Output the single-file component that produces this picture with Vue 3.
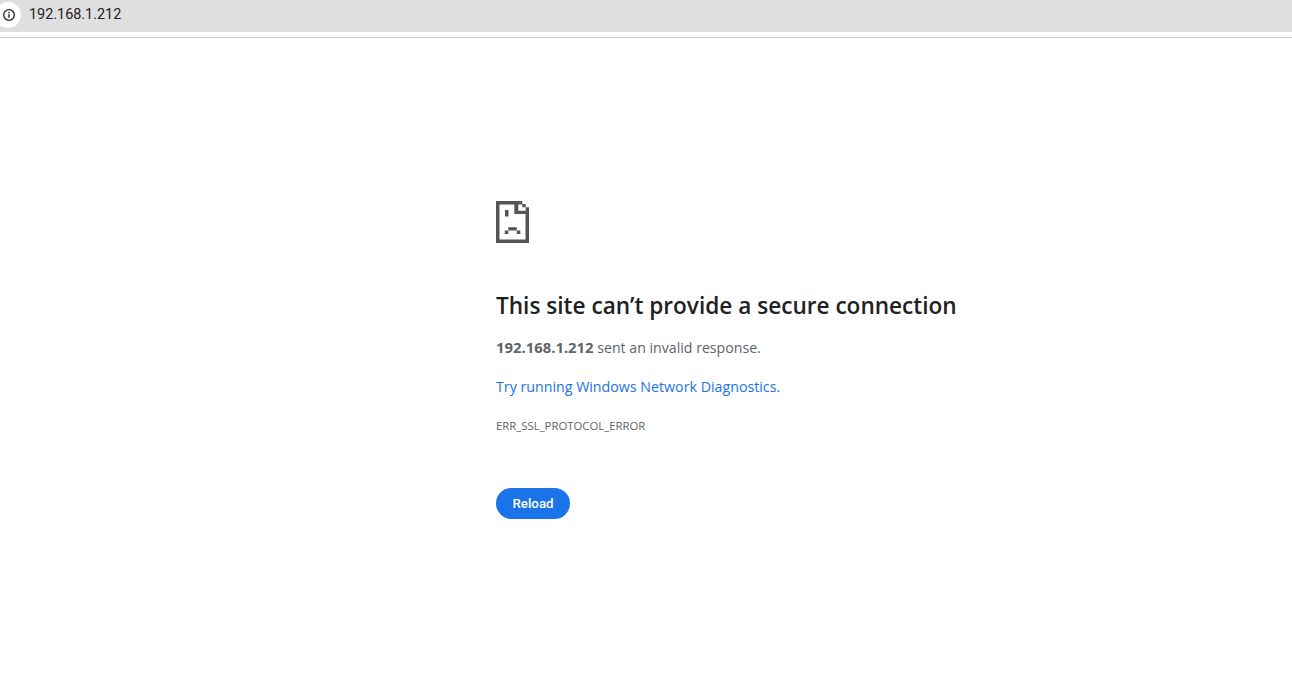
<script setup>
const host = '192.168.1.212';
</script>

<template>
  <div class="page">
    <header class="bar">
      <span class="site-info">
        <svg width="14" height="14" viewBox="0 0 14 14">
          <circle cx="7" cy="7" r="5.3" fill="none" stroke="#202124" stroke-width="1.3" />
          <rect x="6.3" y="6.2" width="1.4" height="3.6" fill="#202124" />
          <rect x="6.3" y="3.9" width="1.4" height="1.4" fill="#202124" />
        </svg>
      </span>
      <span class="url">{{ host }}</span>
    </header>
    <main class="content">
      <svg class="icon" width="33" height="42" viewBox="0 0 33 42">
        <path
          fill="#555"
          fill-rule="evenodd"
          d="M0 0H26.3V3H29.7V6.3H33V42H0ZM3.5 3.5V38.5H29.5V13H18.3V3.5ZM22.3 3.5V9.7H29.7V6.3H26.3V3.5Z"
        />
        <rect x="9" y="9" width="3.5" height="6.5" fill="#555" />
        <path fill="#555" d="M12.3 26.3H20.8V29.6H24.3V33H20.8V29.6H12.3V33H8.8V29.6H12.3Z" />
      </svg>
      <h1>This site can’t provide a secure connection</h1>
      <p class="desc"><strong>{{ host }}</strong> sent an invalid response.</p>
      <p class="link">Try running Windows Network Diagnostics.</p>
      <p class="code">ERR_SSL_PROTOCOL_ERROR</p>
      <button class="reload">Reload</button>
    </main>
  </div>
</template>

<style>
html, body {
  margin: 0;
  background: #fff;
  overflow: hidden;
}
</style>

<style scoped>
.page {
  min-height: 673px;
  font-family: "Open Sans", "Noto Sans", Arial, sans-serif;
}

.bar {
  height: 32px;
  background: #dfdfdf;
  display: flex;
  align-items: flex-start;
  border-bottom: 1px solid #fff;
  position: relative;
}

.bar::after {
  content: "";
  position: absolute;
  left: 0;
  right: 0;
  top: 37px;
  height: 1px;
  background: #cdcdcd;
}

.site-info {
  width: 26px;
  height: 26px;
  margin-left: -5px;
  margin-top: 2px;
  padding-left: 2px;
  box-sizing: border-box;
  background: #fff;
  border-radius: 50%;
  display: flex;
  align-items: center;
  justify-content: center;
}

.url {
  margin-left: 8px;
  margin-top: 6px;
  font-family: "Roboto", Arial, sans-serif;
  font-size: 14.4px;
  line-height: 18px;
  color: #202124;
}

.content {
  margin-left: 496px;
  padding-top: 168px;
  width: 600px;
}

.icon {
  display: block;
}

h1 {
  margin: 47px 0 0;
  font-size: 22.6px;
  line-height: 32px;
  font-weight: 600;
  color: #202124;
}

p {
  margin: 0;
  font-size: 14.15px;
  line-height: 20px;
  color: #5f6368;
}

.desc {
  margin-top: 16px;
  height: 20px;
}

.desc strong {
  font-size: 14.85px;
  line-height: 0;
  font-weight: 700;
}

.link {
  margin-top: 19px;
  font-size: 14.22px;
  color: #1a73e8;
}

.code {
  margin-top: 19px;
  font-size: 11.35px;
}

.reload {
  display: block;
  margin-top: 52px;
  width: 74px;
  height: 31px;
  border: none;
  border-radius: 16px;
  background: #1a73e8;
  color: #fff;
  font-family: "Roboto", Arial, sans-serif;
  font-size: 13.3px;
  font-weight: 500;
  padding: 0;
}
</style>
